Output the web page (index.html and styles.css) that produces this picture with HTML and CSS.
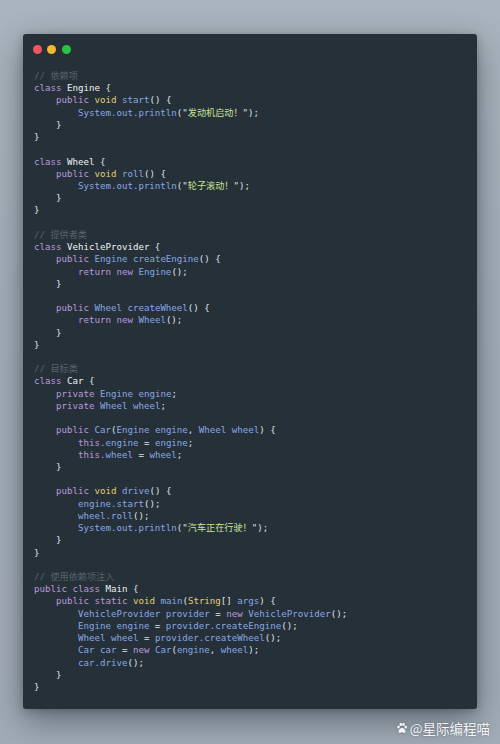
FILE: index.html
```html
<!DOCTYPE html>
<html lang="zh-CN">
<head>
<meta charset="utf-8">
<title>Code</title>
<link rel="stylesheet" href="styles.css">
</head>
<body>
<div class="page">
  <div class="window">
    <div class="dots">
      <span class="dot red"></span>
      <span class="dot yellow"></span>
      <span class="dot green"></span>
    </div>
<pre class="code"><span class="c">// 依赖项</span>
<span class="k">class</span> <span class="n">Engine</span> {
    <span class="k">public</span> <span class="y">void</span> <span class="f">start</span>() {
        <span class="f">System.out.println</span>("<span class="s">发动机启动！</span>");
    }
}

<span class="k">class</span> <span class="n">Wheel</span> {
    <span class="k">public</span> <span class="y">void</span> <span class="f">roll</span>() {
        <span class="f">System.out.println</span>("<span class="s">轮子滚动！</span>");
    }
}

<span class="c">// 提供者类</span>
<span class="k">class</span> <span class="n">VehicleProvider</span> {
    <span class="k">public</span> <span class="f">Engine createEngine</span>() {
        <span class="k">return</span> <span class="k">new</span> <span class="f">Engine</span>();
    }

    <span class="k">public</span> <span class="f">Wheel createWheel</span>() {
        <span class="k">return</span> <span class="k">new</span> <span class="f">Wheel</span>();
    }
}

<span class="c">// 目标类</span>
<span class="k">class</span> <span class="n">Car</span> {
    <span class="k">private</span> <span class="f">Engine engine</span>;
    <span class="k">private</span> <span class="f">Wheel wheel</span>;

    <span class="k">public</span> <span class="f">Car</span>(<span class="f">Engine engine</span>, <span class="f">Wheel wheel</span>) {
        <span class="k">this</span><span class="f">.engine</span> = <span class="f">engine</span>;
        <span class="k">this</span><span class="f">.wheel</span> = <span class="f">wheel</span>;
    }

    <span class="k">public</span> <span class="y">void</span> <span class="f">drive</span>() {
        <span class="f">engine.start</span>();
        <span class="f">wheel.roll</span>();
        <span class="f">System.out.println</span>("<span class="s">汽车正在行驶！</span>");
    }
}

<span class="c">// 使用依赖项注入</span>
<span class="k">public</span> <span class="k">class</span> <span class="n">Main</span> {
    <span class="k">public</span> <span class="k">static</span> <span class="y">void</span> <span class="f">main</span>(<span class="y">String</span>[] <span class="f">args</span>) {
        <span class="f">VehicleProvider provider</span> = <span class="k">new</span> <span class="f">VehicleProvider</span>();
        <span class="f">Engine engine</span> = <span class="f">provider.createEngine</span>();
        <span class="f">Wheel wheel</span> = <span class="f">provider.createWheel</span>();
        <span class="f">Car car</span> = <span class="k">new</span> <span class="f">Car</span>(<span class="f">engine</span>, <span class="f">wheel</span>);
        <span class="f">car.drive</span>();
    }
}</pre>
  </div>
  <div class="watermark">
    <svg class="paw" viewBox="0 0 24 24" width="12" height="12" aria-hidden="true">
      <ellipse cx="5" cy="10" rx="2.6" ry="3.2" fill="#f3f5f7"/>
      <ellipse cx="9.5" cy="4.8" rx="2.6" ry="3.3" fill="#f3f5f7"/>
      <ellipse cx="15" cy="4.8" rx="2.6" ry="3.3" fill="#f3f5f7"/>
      <ellipse cx="19.5" cy="10" rx="2.6" ry="3.2" fill="#f3f5f7"/>
      <path d="M12 11.5c-3.5 0-7 4.5-7 7.5 0 2.5 2.2 3.2 4 2.6 1.2-.4 2-.9 3-.9s1.8.5 3 .9c1.8.6 4-.1 4-2.6 0-3-3.5-7.5-7-7.5z" fill="#f3f5f7"/>
    </svg>
    <span class="wm-text">@星际编程喵</span>
  </div>
</div>
</body>
</html>
```
FILE: styles.css
```css
html, body {
  margin: 0;
  padding: 0;
}

body {
  width: 500px;
  height: 744px;
  overflow: hidden;
  background: linear-gradient(180deg, #aab4be 0%, #a3adb8 50%, #a2acb7 100%);
}

.page {
  padding: 34px 23px 0 23px;
  display: flex;
  flex-direction: column;
}

.window {
  width: 454px;
  box-sizing: border-box;
  background: #263038;
  border-radius: 3px;
  padding: 10.5px 11px 16px 11px;
  box-shadow: 0 12px 34px rgba(20, 28, 38, 0.45), 0 2px 8px rgba(20, 28, 38, 0.25);
}

.dots {
  display: flex;
  gap: 5.3px;
  height: 9px;
  margin-left: -1px;
  margin-bottom: 16.5px;
}

.dot {
  width: 9px;
  height: 9px;
  border-radius: 50%;
}

.red { background: #f0565a; }
.yellow { background: #f3b82c; }
.green { background: #2bc43e; }

.code {
  margin: 0;
  font-family: "DejaVu Sans Mono", "Noto Sans CJK SC", monospace;
  font-size: 9.15px;
  line-height: 12.22px;
  color: #dfe5ea;
  white-space: pre;
}

.c { color: #56636e; }
.k { color: #b99bdc; }
.y { color: #e2cf74; }
.f { color: #86a8e6; }
.s { color: #c6e39a; }
.n { color: #eef2f5; }

.watermark {
  display: flex;
  justify-content: flex-end;
  align-items: center;
  gap: 2px;
  margin-top: 11px;
  margin-right: -13px;
}

.paw {
  display: block;
  filter: drop-shadow(0 0 1px rgba(0, 0, 0, 0.3));
}

.wm-text {
  font-family: "Noto Sans CJK SC", "Noto Sans", sans-serif;
  font-size: 13.5px;
  line-height: 16px;
  color: #f3f5f7;
  text-shadow: 0 0 2px rgba(0, 0, 0, 0.35);
}
```
